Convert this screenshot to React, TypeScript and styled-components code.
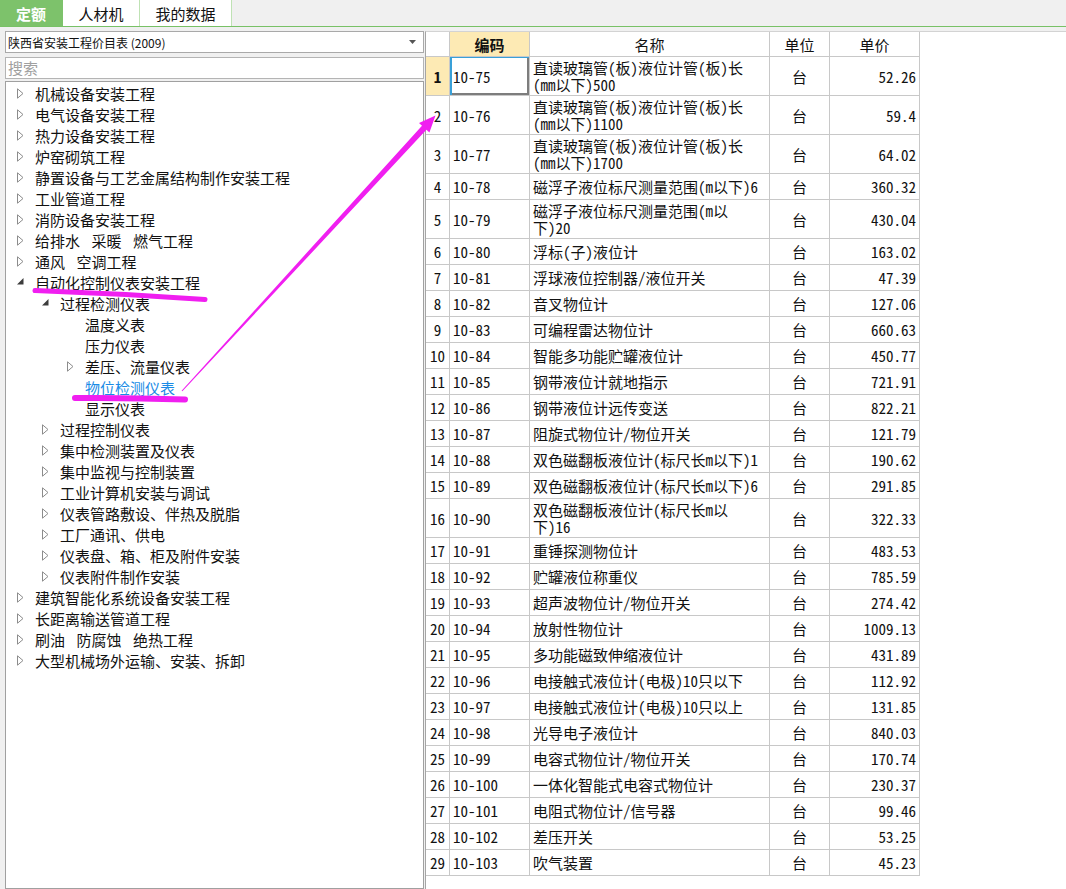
import React from "react";
import styled, { createGlobalStyle } from "styled-components";

const GlobalStyle = createGlobalStyle`
  html, body { margin: 0; padding: 0; height: 100%; overflow: hidden; background: #f0f0f0; }
  body { font-family: "Noto Sans CJK SC", "Liberation Sans", sans-serif; color: #111; }
  #root { height: 100%; }
  * { box-sizing: border-box; }
`;

const SONG = `"Noto Sans Mono CJK SC", "Liberation Mono", "Noto Sans CJK SC", monospace`;

const Page = styled.div`
  position: relative;
  width: 100%;
  height: 100%;
  display: flex;
  flex-direction: column;
  background: #f0f0f0;
  overflow: hidden;
`;

const TabBar = styled.div`
  flex: none;
  display: flex;
  height: 27px;
  border-bottom: 1px solid #78c166;
  background: #f0f0f0;
`;

const Tab = styled.div<{ $active?: boolean; $w: number }>`
  width: ${(p) => p.$w}px;
  display: flex;
  align-items: center;
  justify-content: center;
  font-size: 15px;
  line-height: 1;
  background: ${(p) => (p.$active ? "#7dc26b" : "#ffffff")};
  color: ${(p) => (p.$active ? "#ffffff" : "#111111")};
  font-weight: ${(p) => (p.$active ? 700 : 400)};
  border-right: 1px solid ${(p) => (p.$active ? "#7dc26b" : "#bfe2b4")};
`;

const Body = styled.div`
  flex: 1;
  min-height: 0;
  display: flex;
  padding-top: 4px;
`;

const LeftPane = styled.div`
  width: 425px;
  flex: none;
  display: flex;
  flex-direction: column;
  padding: 0 1px 0 5px;
`;

const Select = styled.div`
  flex: none;
  height: 22px;
  margin-bottom: 4px;
  background: #fff;
  border: 1px solid #a9a9a9;
  display: flex;
  align-items: center;
  justify-content: space-between;
  padding: 0 7px 0 2px;
  font-size: 12px;
  color: #111;
`;

const SearchBox = styled.div`
  flex: none;
  height: 22px;
  margin-bottom: 2px;
  background: #fff;
  border: 1px solid #b4b4b4;
  display: flex;
  align-items: center;
  padding: 0 0 2px 2px;
  font-family: ${SONG};
  font-size: 15px;
  color: #a0a0a0;
`;

const TreeBox = styled.div`
  flex: 1;
  background: #fff;
  border: 1px solid #a0a0a0;
  padding-top: 1px;
`;

const TreeRow = styled.div<{ $level: number }>`
  height: 21px;
  display: flex;
  align-items: center;
  padding-left: ${(p) => 10 + p.$level * 25}px;
`;

const Toggle = styled.span`
  width: 19px;
  flex: none;
  display: flex;
  align-items: center;
  padding-left: 1px;
`;

const Label = styled.span<{ $selected?: boolean }>`
  font-family: ${SONG};
  font-size: 15px;
  line-height: 21px;
  white-space: pre;
  word-spacing: 4px;
  color: ${(p) => (p.$selected ? "#1a8be6" : "#111")};
`;

const RightPane = styled.div`
  flex: 1;
  background: #fff;
  border-top: 1px solid #d3d3d3;
  border-left: 1px solid #a5a5a5;
`;

const Grid = styled.div`
  width: 494px;
  display: flex;
  flex-direction: column;
`;

const Row = styled.div<{ $h: number }>`
  display: grid;
  grid-template-columns: 24px 80px 240px 60px 90px;
  height: ${(p) => p.$h}px;
`;

const Cell = styled.div<{
  $align?: "left" | "center" | "right";
  $hl?: boolean;
  $bold?: boolean;
  $focus?: boolean;
}>`
  border-right: 1px solid #c8c8c8;
  border-bottom: 1px solid #c8c8c8;
  display: flex;
  flex-direction: column;
  justify-content: center;
  align-items: ${(p) =>
    p.$align === "center" ? "center" : p.$align === "right" ? "flex-end" : "flex-start"};
  padding: ${(p) => (p.$align === "right" ? "0 3px 0 0" : p.$align === "center" ? "0" : "0 0 0 3px")};
  background: ${(p) => (p.$hl ? "#fdeab4" : "#fff")};
  font-family: ${SONG};
  font-size: 15px;
  line-height: 17px;
  font-weight: ${(p) => (p.$bold ? 700 : 400)};
  white-space: nowrap;
  color: #111;
  box-shadow: ${(p) => (p.$focus ? "inset 2px 1px 0 #39a0d8, inset -2px -2px 0 #7d7d7d" : "none")};
`;

const Overlay = styled.svg`
  position: absolute;
  left: 0;
  top: 0;
  pointer-events: none;
`;

type Node = { label: string; level: number; state: "open" | "closed" | "leaf"; selected?: boolean };

const tree: Node[] = [
  { label: "机械设备安装工程", level: 0, state: "closed" },
  { label: "电气设备安装工程", level: 0, state: "closed" },
  { label: "热力设备安装工程", level: 0, state: "closed" },
  { label: "炉窑砌筑工程", level: 0, state: "closed" },
  { label: "静置设备与工艺金属结构制作安装工程", level: 0, state: "closed" },
  { label: "工业管道工程", level: 0, state: "closed" },
  { label: "消防设备安装工程", level: 0, state: "closed" },
  { label: "给排水 采暖 燃气工程", level: 0, state: "closed" },
  { label: "通风 空调工程", level: 0, state: "closed" },
  { label: "自动化控制仪表安装工程", level: 0, state: "open" },
  { label: "过程检测仪表", level: 1, state: "open" },
  { label: "温度义表", level: 2, state: "leaf" },
  { label: "压力仪表", level: 2, state: "leaf" },
  { label: "差压、流量仪表", level: 2, state: "closed" },
  { label: "物位检测仪表", level: 2, state: "leaf", selected: true },
  { label: "显示仪表", level: 2, state: "leaf" },
  { label: "过程控制仪表", level: 1, state: "closed" },
  { label: "集中检测装置及仪表", level: 1, state: "closed" },
  { label: "集中监视与控制装置", level: 1, state: "closed" },
  { label: "工业计算机安装与调试", level: 1, state: "closed" },
  { label: "仪表管路敷设、伴热及脱脂", level: 1, state: "closed" },
  { label: "工厂通讯、供电", level: 1, state: "closed" },
  { label: "仪表盘、箱、柜及附件安装", level: 1, state: "closed" },
  { label: "仪表附件制作安装", level: 1, state: "closed" },
  { label: "建筑智能化系统设备安装工程", level: 0, state: "closed" },
  { label: "长距离输送管道工程", level: 0, state: "closed" },
  { label: "刷油 防腐蚀 绝热工程", level: 0, state: "closed" },
  { label: "大型机械场外运输、安装、拆卸", level: 0, state: "closed" },
];

type Item = { code: string; name: string[]; price: string };

const items: Item[] = [
  { code: "10-75", name: ["直读玻璃管(板)液位计管(板)长", "(mm以下)500"], price: "52.26" },
  { code: "10-76", name: ["直读玻璃管(板)液位计管(板)长", "(mm以下)1100"], price: "59.4" },
  { code: "10-77", name: ["直读玻璃管(板)液位计管(板)长", "(mm以下)1700"], price: "64.02" },
  { code: "10-78", name: ["磁浮子液位标尺测量范围(m以下)6"], price: "360.32" },
  { code: "10-79", name: ["磁浮子液位标尺测量范围(m以", "下)20"], price: "430.04" },
  { code: "10-80", name: ["浮标(子)液位计"], price: "163.02" },
  { code: "10-81", name: ["浮球液位控制器/液位开关"], price: "47.39" },
  { code: "10-82", name: ["音叉物位计"], price: "127.06" },
  { code: "10-83", name: ["可编程雷达物位计"], price: "660.63" },
  { code: "10-84", name: ["智能多功能贮罐液位计"], price: "450.77" },
  { code: "10-85", name: ["钢带液位计就地指示"], price: "721.91" },
  { code: "10-86", name: ["钢带液位计远传变送"], price: "822.21" },
  { code: "10-87", name: ["阻旋式物位计/物位开关"], price: "121.79" },
  { code: "10-88", name: ["双色磁翻板液位计(标尺长m以下)1"], price: "190.62" },
  { code: "10-89", name: ["双色磁翻板液位计(标尺长m以下)6"], price: "291.85" },
  { code: "10-90", name: ["双色磁翻板液位计(标尺长m以", "下)16"], price: "322.33" },
  { code: "10-91", name: ["重锤探测物位计"], price: "483.53" },
  { code: "10-92", name: ["贮罐液位称重仪"], price: "785.59" },
  { code: "10-93", name: ["超声波物位计/物位开关"], price: "274.42" },
  { code: "10-94", name: ["放射性物位计"], price: "1009.13" },
  { code: "10-95", name: ["多功能磁致伸缩液位计"], price: "431.89" },
  { code: "10-96", name: ["电接触式液位计(电极)10只以下"], price: "112.92" },
  { code: "10-97", name: ["电接触式液位计(电极)10只以上"], price: "131.85" },
  { code: "10-98", name: ["光导电子液位计"], price: "840.03" },
  { code: "10-99", name: ["电容式物位计/物位开关"], price: "170.74" },
  { code: "10-100", name: ["一体化智能式电容式物位计"], price: "230.37" },
  { code: "10-101", name: ["电阻式物位计/信号器"], price: "99.46" },
  { code: "10-102", name: ["差压开关"], price: "53.25" },
  { code: "10-103", name: ["吹气装置"], price: "45.23" },
];

const ClosedIcon = () => (
  <svg width="7" height="11" viewBox="0 0 7 11">
    <path d="M0.5 0.8 L6 5.5 L0.5 10.2 Z" fill="#fff" stroke="#8c8c8c" strokeWidth="1" />
  </svg>
);

const OpenIcon = () => (
  <svg width="7" height="7" viewBox="0 0 7 7" style={{ marginTop: -3 }}>
    <path d="M6.5 0 L6.5 6.5 L0 6.5 Z" fill="#3c3c3c" />
  </svg>
);

const DropArrow = () => (
  <svg width="7" height="4" viewBox="0 0 7 4">
    <path d="M0 0 L7 0 L3.5 4 Z" fill="#555" />
  </svg>
);

const MAGENTA = "#f01ff0";

export default function App() {
  return (
    <Page>
      <GlobalStyle />
      <TabBar>
        <Tab $active $w={63}>定额</Tab>
        <Tab $w={77}>人材机</Tab>
        <Tab $w={92}>我的数据</Tab>
      </TabBar>
      <Body>
        <LeftPane>
          <Select>
            <span>陕西省安装工程价目表 (2009)</span>
            <DropArrow />
          </Select>
          <SearchBox>搜索</SearchBox>
          <TreeBox>
            {tree.map((n, i) => (
              <TreeRow key={i} $level={n.level}>
                <Toggle>
                  {n.state === "closed" && <ClosedIcon />}
                  {n.state === "open" && <OpenIcon />}
                </Toggle>
                <Label $selected={n.selected}>{n.label}</Label>
              </TreeRow>
            ))}
          </TreeBox>
        </LeftPane>
        <RightPane>
          <Grid>
            <Row $h={25}>
              <Cell $align="center"></Cell>
              <Cell $align="center" $hl $bold>编码</Cell>
              <Cell $align="center">名称</Cell>
              <Cell $align="center">单位</Cell>
              <Cell $align="center">单价</Cell>
            </Row>
            {items.map((it, i) => (
              <Row key={it.code} $h={it.name.length > 1 ? 39 : 26}>
                <Cell $align="center" $hl={i === 0} $bold={i === 0}>{i + 1}</Cell>
                <Cell $focus={i === 0}>{it.code}</Cell>
                <Cell>
                  {it.name.map((l, j) => (
                    <span key={j}>{l}</span>
                  ))}
                </Cell>
                <Cell $align="center">台</Cell>
                <Cell $align="right">{it.price}</Cell>
              </Row>
            ))}
          </Grid>
        </RightPane>
      </Body>
      <Overlay width="1066" height="889" viewBox="0 0 1066 889">
        <path
          d="M35 290.5 Q120 293.5 205 299.5"
          stroke={MAGENTA}
          strokeWidth="5"
          strokeLinecap="round"
          fill="none"
        />
        <path
          d="M75 398 Q130 397.5 185 399.5"
          stroke={MAGENTA}
          strokeWidth="6"
          strokeLinecap="round"
          fill="none"
        />
        <polygon
          points="181.6,390.7 422,125.8 419,123.1 435.5,115.5 429.4,132.5 426.4,129.8 182.4,391.3"
          fill={MAGENTA}
        />
      </Overlay>
    </Page>
  );
}
